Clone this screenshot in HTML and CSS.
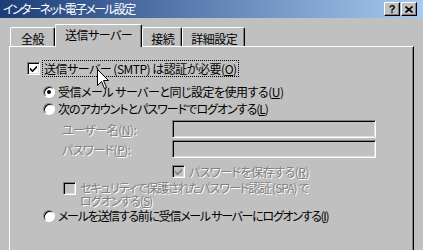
FILE: index.html
```html
<!DOCTYPE html>
<html>
	<head>
		<meta charset="UTF-8">
		<title>インターネット電子メール設定</title>
		<link rel="stylesheet" href="styles.css">
	</head>
	<body>
		<div class="titlebar">
			<span class="title">インターネット電子メール設定</span>
			<div class="caption-buttons">
				<span class="cap-btn help">?</span>
				<span class="cap-btn close">
					<svg width="8" height="7" viewBox="0 0 8 7"><path d="M0.5 0.5 L7.5 6.5 M7.5 0.5 L0.5 6.5" stroke="#000" stroke-width="1.6" fill="none"/></svg>
				</span>
			</div>
		</div>

		<div class="tabs">
			<div class="tab first">全般</div>
			<div class="tab active">送信サーバー</div>
			<div class="tab">接続</div>
			<div class="tab">詳細設定</div>
		</div>

		<div class="panel">
			<div class="row auth">
				<span class="check"><svg width="7" height="7" viewBox="0 0 7 7"><path d="M0 2.5 L2.5 5 L7 0.5 L7 2.8 L2.5 7.3 L0 4.8 Z" fill="#000"/></svg></span>
				<span class="focus">送信サーバー (SMTP) は認証が必要(<u>O</u>)</span>
			</div>

			<div class="options">
				<div class="row radio-row first-radio">
					<span class="radio on"></span>
					<span>受信メール サーバーと同じ設定を使用する(<u>U</u>)</span>
				</div>
				<div class="row radio-row">
					<span class="radio"></span>
					<span class="narrow">次のアカウントとパスワードでログオンする(<u>L</u>)</span>
				</div>

				<div class="field user">
					<span class="label disabled">ユーザー名(<u>N</u>):</span>
					<span class="input"></span>
				</div>
				<div class="field pass">
					<span class="label disabled">パスワード(<u>P</u>):</span>
					<span class="input"></span>
				</div>

				<div class="row save">
					<span class="check off"><svg width="7" height="7" viewBox="0 0 7 7"><path d="M0 2.5 L2.5 5 L7 0.5 L7 2.8 L2.5 7.3 L0 4.8 Z" fill="#808080"/></svg></span>
					<span class="disabled">パスワードを保存する(<u>R</u>)</span>
				</div>
				<div class="row spa">
					<span class="check off"></span>
					<span class="disabled narrow">セキュリティで保護されたパスワード認証 (SPA) で<br>ログオンする(<u>S</u>)</span>
				</div>

				<div class="row radio-row">
					<span class="radio"></span>
					<span class="narrower">メールを送信する前に受信メール サーバーにログオンする(<u>I</u>)</span>
				</div>
			</div>
		</div>

		<!-- mouse pointer over the first checkbox -->
		<svg class="cursor" width="13" height="21" viewBox="0 0 13 21">
			<path d="M0.5 0.5 L0.5 16.5 L4.5 12.5 L7.5 19.5 L9.5 18.5 L6.5 11.5 L11.5 11.5 Z" fill="#fff" stroke="#000" stroke-width="1"/>
		</svg>
	</body>
</html>
```

FILE: styles.css
```css
body {
	margin: 0;
	width: 423px;
	height: 250px;
	overflow: hidden;
	position: relative;
	background-color: #c0c0c0;
	font-family: "Noto Sans CJK JP", "DejaVu Sans", sans-serif;
	font-size: 12px;
	font-feature-settings: "palt";
	letter-spacing: -0.5px;
	color: #000;
}

/* title bar */
.titlebar {
	height: 18px;
	display: flex;
	align-items: center;
	justify-content: space-between;
	padding: 0 6px 0 3px;
	background: linear-gradient(to right, #1c3c78, #a6caf0);
}
.title {
	color: #fff;
	line-height: 18px;
	letter-spacing: -1.7px;
}
.caption-buttons {
	display: flex;
	gap: 1px;
}
.cap-btn {
	width: 14px;
	height: 12px;
	display: flex;
	align-items: center;
	justify-content: center;
	background-color: #c0c0c0;
	border: 1px solid;
	border-color: #fff #000 #000 #fff;
	box-shadow: inset -1px -1px #808080;
}
.cap-btn.help {
	font-family: "Liberation Sans", sans-serif;
	font-weight: bold;
	font-size: 11px;
	line-height: 12px;
	letter-spacing: 0;
}

/* tabs */
.tabs {
	display: flex;
	align-items: flex-end;
	margin-top: 6px;
	padding-left: 10px;
}
.tab {
	padding: 3px 7px 0 8px;
	line-height: 15px;
	height: 15px;
	border-left: 1px solid #fff;
	border-top: 1px solid #fff;
	border-right: 1px solid #000;
	border-radius: 2px 2px 0 0;
	box-shadow: inset -1px 0 #808080;
}
.tab.first {
	padding: 3px 10px 0 10px;
}
.tab.active {
	position: relative;
	z-index: 1;
	padding: 2px 9px 5px 9px;
	margin-bottom: -1px;
	background-color: #c0c0c0;
}

/* page of the tab */
.panel {
	margin-left: 9px;
	width: 405px;
	height: 220px;
	box-sizing: border-box;
	border-left: 1px solid #fff;
	border-top: 1px solid #fff;
	border-right: 1px solid #000;
	box-shadow: inset -1px 0 #808080;
	padding-left: 17px;
}

.row {
	display: flex;
	align-items: center;
	height: 17px;
	line-height: 13px;
}
.row.auth {
	margin-top: 13px;
}
.focus {
	margin-left: 3px;
	padding: 1px 1px;
	outline: 1px dotted #000;
}
.narrow {
	letter-spacing: -1px;
}
.narrower {
	letter-spacing: -1.3px;
}

.options {
	padding-left: 16px;
}
.first-radio {
	margin-top: 6px;
}
.radio-row > span + span {
	margin-left: 3px;
}

.radio {
	position: relative;
	width: 10px;
	height: 10px;
	border: 1px solid;
	border-color: #808080 #fff #fff #808080;
	border-radius: 50%;
	background-color: #fff;
	box-shadow: inset 1px 1px #000;
}
.radio.on::after {
	content: "";
	position: absolute;
	left: 3px;
	top: 3px;
	width: 4px;
	height: 4px;
	border-radius: 50%;
	background-color: #000;
}

.check {
	width: 11px;
	height: 11px;
	display: flex;
	align-items: center;
	justify-content: center;
	border: 1px solid;
	border-color: #808080 #fff #fff #808080;
	box-shadow: inset 1px 1px #000, inset -1px -1px #dfdfdf;
	background-color: #fff;
}
.check.off {
	background-color: #c0c0c0;
}

.disabled {
	color: #808080;
	text-shadow: 1px 1px 0 #fff;
}

/* user name / password */
.field {
	display: flex;
	align-items: center;
	padding-left: 19px;
}
.field.user {
	margin-top: 3px;
}
.field.pass {
	margin-top: 2px;
}
.label {
	width: 110px;
}
.input {
	width: 200px;
	height: 14px;
	border: 1px solid;
	border-color: #808080 #fff #fff #808080;
	box-shadow: inset 1px 1px #000, inset -1px -1px #dfdfdf;
	padding: 1px;
	background-color: #c0c0c0;
}

.row.save {
	margin-top: 5px;
	padding-left: 129px;
}
.row.save .check + span {
	margin-left: 4px;
}
.row.spa {
	margin-top: 1px;
	height: auto;
	align-items: flex-start;
	padding-left: 20px;
}
.row.spa .check {
	margin-top: 1px;
}
.row.spa .check + span {
	margin-left: 4px;
}

.cursor {
	position: absolute;
	left: 97px;
	top: 69px;
}
```
